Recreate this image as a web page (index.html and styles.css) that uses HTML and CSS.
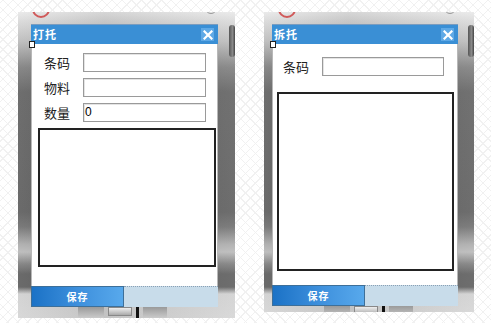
FILE: index.html
```html
<!DOCTYPE html>
<html lang="zh">
<head>
<meta charset="utf-8">
<link rel="stylesheet" href="styles.css">
</head>
<body>
<div class="stage">
  <div class="phone phone-a">
    <span class="ring ring-red"></span>
    <span class="ring ring-gray"></span>
    <span class="knob"></span>
    <div class="dialog dialog-a">
      <div class="titlebar">
        <span class="title">打托</span>
        <span class="close"><svg width="10" height="10" viewBox="0 0 10 10"><path d="M1.5 1.5 L8.5 8.5 M8.5 1.5 L1.5 8.5" stroke="#fff" stroke-width="2.2" stroke-linecap="square"/></svg></span>
      </div>
      <span class="handle"></span>
      <div class="body body-a">
        <div class="row"><span class="label">条码</span><span class="input"></span></div>
        <div class="row"><span class="label">物料</span><span class="input"></span></div>
        <div class="row"><span class="label">数量</span><span class="input">0</span></div>
        <div class="box box-a"></div>
      </div>
      <div class="savebar">
        <span class="save">保存</span>
        <span class="rest"></span>
      </div>
    </div>
    <div class="keys">
      <span class="key k1"></span><span class="key k2"></span><span class="key k3"></span><span class="key k4"></span>
    </div>
  </div>

  <div class="phone phone-b">
    <span class="ring ring-red"></span>
    <span class="ring ring-gray"></span>
    <span class="knob"></span>
    <div class="dialog dialog-b">
      <div class="titlebar">
        <span class="title">拆托</span>
        <span class="close"><svg width="10" height="10" viewBox="0 0 10 10"><path d="M1.5 1.5 L8.5 8.5 M8.5 1.5 L1.5 8.5" stroke="#fff" stroke-width="2.2" stroke-linecap="square"/></svg></span>
      </div>
      <span class="handle"></span>
      <div class="body body-b">
        <div class="row"><span class="label">条码</span><span class="input"></span></div>
        <div class="box box-b"></div>
      </div>
      <div class="savebar">
        <span class="save">保存</span>
        <span class="rest"></span>
      </div>
    </div>
    <div class="keys">
      <span class="key k1"></span><span class="key k2"></span><span class="key k3"></span><span class="key k4"></span>
    </div>
  </div>
</div>
</body>
</html>
```

FILE: styles.css
```css
html, body {
  margin: 0;
  padding: 0;
}
body {
  width: 491px;
  height: 323px;
  overflow: hidden;
  font-family: "Noto Sans CJK SC", "Noto Sans", sans-serif;
  background-color: #fff;
  background-image:
    repeating-linear-gradient(45deg, transparent 0 6px, #f1f1f1 6px 7px),
    repeating-linear-gradient(-45deg, transparent 0 6px, #f1f1f1 6px 7px);
}
.stage {
  display: flex;
  align-items: flex-start;
  padding-top: 12px;
}
.phone {
  position: relative;
  overflow: hidden;
  display: flex;
  flex-direction: column;
  background:
    linear-gradient(90deg, rgba(255,255,255,0.10) 0, rgba(0,0,0,0.08) 40%, rgba(255,255,255,0.12) 100%),
    linear-gradient(180deg, #e8e8e8 0, #d6d6d6 10px, #b8b8b8 30px, #7c7c7c 55px, #5e5e5e 80px, #5a5a5a 200px, #6c6c6c 215px, #a8a8a8 232px, #b8b8b8 240px, #7a7a7a 252px, #5a5a5a 262px, #5a5a5a 275px, #cfcfcf 282px, #d4d4d4 100%);
}
.phone-a {
  margin-left: 18px;
  width: 217px;
  height: 306px;
}
.phone-b {
  margin-left: 29px;
  width: 210px;
  height: 300px;
}
.ring {
  position: absolute;
  top: -12px;
  width: 14px;
  height: 14px;
  border-radius: 50%;
}
.ring-red {
  left: 14px;
  border: 2px solid #d05a5a;
}
.ring-gray {
  right: 18px;
  border: 1px solid #999;
  top: -10px;
  width: 10px;
  height: 10px;
}
.knob {
  position: absolute;
  top: 13px;
  right: 0;
  width: 6px;
  height: 32px;
  border-radius: 3px;
  background: linear-gradient(90deg, #555, #8a8a8a 60%, #444);
}
.dialog {
  position: relative;
  margin-top: 12px;
  display: flex;
  flex-direction: column;
}
.dialog-a {
  margin-left: 13px;
  width: 187px;
}
.dialog-b {
  margin-left: 8px;
  width: 186px;
}
.titlebar {
  height: 20px;
  background: #3a8fd5;
  border-top: 1px solid #7a9cbf;
  box-sizing: border-box;
  display: flex;
  align-items: center;
  justify-content: space-between;
  padding: 0 4px 0 2px;
}
.title {
  color: #fff;
  font-size: 11px;
  font-weight: bold;
  letter-spacing: 1px;
  line-height: 1;
}
.close {
  width: 13px;
  height: 13px;
  background: #5fa9e6;
  display: flex;
  align-items: center;
  justify-content: center;
}
.handle {
  position: absolute;
  left: -2px;
  top: 17px;
  width: 4px;
  height: 5px;
  background: #fff;
  border: 1px solid #222;
}
.body {
  background: #fff;
  border-left: 1px solid #b8b8b8;
  border-right: 1px solid #b8b8b8;
  box-sizing: border-box;
  display: flex;
  flex-direction: column;
}
.body-a {
  height: 242px;
  padding-top: 9px;
  gap: 6px;
}
.body-b {
  height: 241px;
  padding-top: 13px;
}
.row {
  display: flex;
  align-items: center;
  height: 19px;
}
.label {
  font-size: 13px;
  color: #222;
  line-height: 19px;
}
.body-a .label {
  margin-left: 12px;
  width: 39px;
}
.body-b .label {
  margin-left: 10px;
  width: 39px;
}
.input {
  height: 19px;
  box-sizing: border-box;
  border: 1px solid #9a9a9a;
  box-shadow: inset 1px 1px 0 #e4e4e4;
  font-family: "Liberation Sans", sans-serif;
  font-size: 12px;
  line-height: 17px;
  padding-left: 1px;
  color: #000;
}
.body-a .input {
  width: 123px;
}
.body-b .input {
  width: 122px;
}
.box {
  border: 2px solid #222;
  box-sizing: border-box;
}
.box-a {
  margin-left: 6px;
  width: 178px;
  height: 139px;
}
.box-b {
  margin-top: 16px;
  margin-left: 4px;
  width: 177px;
  height: 179px;
}
.savebar {
  display: flex;
  height: 21px;
}
.save {
  width: 93px;
  box-sizing: border-box;
  border: 1px solid #3d6f99;
  background: linear-gradient(90deg, #1b72c6 0, #3d8fdc 50%, #58a9ec 100%);
  color: #fff;
  font-size: 10px;
  font-weight: bold;
  letter-spacing: 1px;
  display: flex;
  align-items: center;
  justify-content: center;
}
.rest {
  flex: 1;
  background: #c8dcea;
  border-top: 1px dotted #8aa0b4;
  box-sizing: border-box;
}
.keys {
  display: flex;
  align-items: flex-start;
  padding-left: 60px;
  gap: 4px;
}
.key {
  height: 12px;
  background: linear-gradient(180deg, #9a9a9a, #cfcfcf);
}
.k1 { width: 26px; }
.k2 { width: 22px; height: 7px; margin-top: 0; background: linear-gradient(180deg, #eee, #aaa); border: 1px solid #888; }
.k3 { width: 3px; background: #111; }
.k4 { width: 24px; }
```
